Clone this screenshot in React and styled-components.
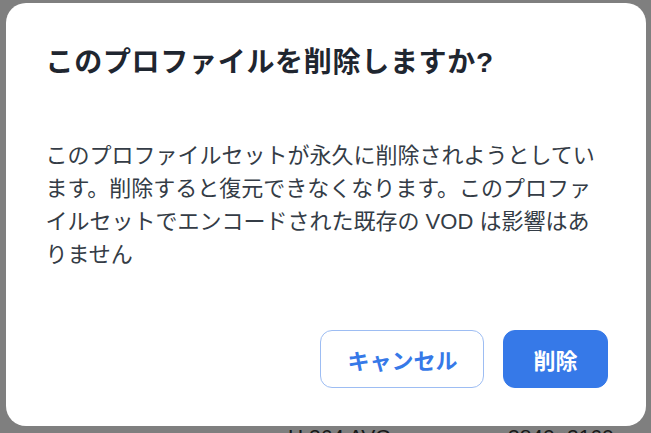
import React from "react";
import styled, { createGlobalStyle } from "styled-components";

const GlobalStyle = createGlobalStyle`
  html, body {
    margin: 0;
    padding: 0;
    height: 100%;
    overflow: hidden;
  }
  body {
    font-family: "Liberation Sans", "Noto Sans CJK JP", sans-serif;
    background: #fff;
  }
`;

const Page = styled.div`
  height: 100vh;
  display: flex;
  flex-direction: column;
  justify-content: flex-end;
`;

const TableRow = styled.div`
  display: flex;
  height: 8px;
  padding-left: 288px;
  font-size: 21px;
  line-height: 24px;
  color: #333;
  white-space: nowrap;
`;

const Cell = styled.div`
  width: ${(p) => p.width}px;
`;

const Overlay = styled.div`
  position: fixed;
  inset: 0;
  background: rgba(0, 0, 0, 0.5);
  display: flex;
  align-items: center;
  justify-content: center;
  padding-bottom: 4px;
`;

const Dialog = styled.div`
  width: 640px;
  height: 423px;
  box-sizing: border-box;
  background: #fff;
  border-radius: 20px;
  padding: 40px 38px 38px 40px;
  display: flex;
  flex-direction: column;
`;

const Title = styled.h2`
  margin: 0;
  font-size: 28px;
  line-height: 40px;
  font-weight: 700;
  letter-spacing: 0.7px;
  color: #1f2630;
`;

const Message = styled.p`
  margin: 56px 0 0;
  font-size: 22px;
  line-height: 33px;
  color: #343c46;
`;

const Actions = styled.div`
  margin-top: auto;
  display: flex;
  justify-content: flex-end;
  gap: 19px;
`;

const Button = styled.button`
  height: 58px;
  padding: 0 ${(p) => (p.primary ? 29 : 26)}px;
  border-radius: 12px;
  font-family: inherit;
  font-size: 22px;
  font-weight: 700;
  cursor: pointer;
  border: 1px solid ${(p) => (p.primary ? "#3679e8" : "#9dbdf3")};
  background: ${(p) => (p.primary ? "#3679e8" : "#fff")};
  color: ${(p) => (p.primary ? "#fff" : "#3679e8")};
`;

export default function App() {
  return (
    <>
      <GlobalStyle />
      <Page>
        <TableRow>
          <Cell width={220}>H.264 AVC</Cell>
          <Cell width={140}>3840×2160</Cell>
        </TableRow>
      </Page>
      <Overlay>
        <Dialog role="dialog" aria-modal="true">
          <Title>このプロファイルを削除しますか?</Title>
          <Message>
            このプロファイルセットが永久に削除されようとしています。削除すると復元できなくなります。このプロファイルセットでエンコードされた既存の
            VOD は影響はありません
          </Message>
          <Actions>
            <Button>キャンセル</Button>
            <Button primary>削除</Button>
          </Actions>
        </Dialog>
      </Overlay>
    </>
  );
}
